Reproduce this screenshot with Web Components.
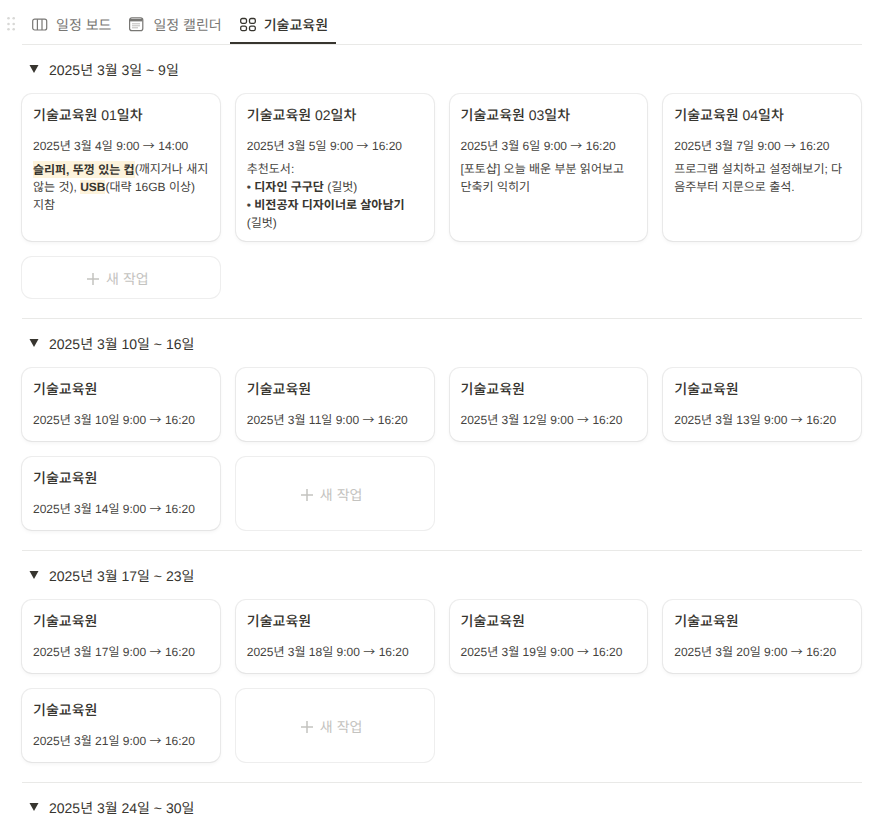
<!DOCTYPE html>
<html lang="ko">
<head>
<meta charset="utf-8">
<title>일정</title>
<style>
  html, body { margin: 0; background: #fff; height: 828px; overflow: hidden; }
  body { font-family: "Liberation Sans", "Noto Sans CJK KR", sans-serif; color: #37352f; text-rendering: geometricPrecision; }
</style>
</head>
<body>
<schedule-page>
  <view-tabs></view-tabs>

  <week-section label="2025년 3월 3일 ~ 9일">
    <task-card heading="기술교육원 01일차" when="2025년 3월 4일 9:00 → 14:00">
      <b class="mark tall">슬리퍼, 뚜껑 있는 컵</b>(깨지거나 새지 않는 것), <b class="mark">USB</b>(대략 16GB 이상)<br>지참
    </task-card>
    <task-card heading="기술교육원 02일차" when="2025년 3월 5일 9:00 → 16:20">
      추천도서:<br>• <b>디자인 구구단</b> (길벗)<br>• <b>비전공자 디자이너로 살아남기</b><br>(길벗)
    </task-card>
    <task-card heading="기술교육원 03일차" when="2025년 3월 6일 9:00 → 16:20">
      [포토샵] 오늘 배운 부분 읽어보고 단축키 익히기
    </task-card>
    <task-card heading="기술교육원 04일차" when="2025년 3월 7일 9:00 → 16:20">
      프로그램 설치하고 설정해보기; 다음주부터 지문으로 출석.
    </task-card>
    <new-card></new-card>
  </week-section>

  <week-section label="2025년 3월 10일 ~ 16일">
    <task-card heading="기술교육원" when="2025년 3월 10일 9:00 → 16:20"></task-card>
    <task-card heading="기술교육원" when="2025년 3월 11일 9:00 → 16:20"></task-card>
    <task-card heading="기술교육원" when="2025년 3월 12일 9:00 → 16:20"></task-card>
    <task-card heading="기술교육원" when="2025년 3월 13일 9:00 → 16:20"></task-card>
    <task-card heading="기술교육원" when="2025년 3월 14일 9:00 → 16:20"></task-card>
    <new-card></new-card>
  </week-section>

  <week-section label="2025년 3월 17일 ~ 23일">
    <task-card heading="기술교육원" when="2025년 3월 17일 9:00 → 16:20"></task-card>
    <task-card heading="기술교육원" when="2025년 3월 18일 9:00 → 16:20"></task-card>
    <task-card heading="기술교육원" when="2025년 3월 19일 9:00 → 16:20"></task-card>
    <task-card heading="기술교육원" when="2025년 3월 20일 9:00 → 16:20"></task-card>
    <task-card heading="기술교육원" when="2025년 3월 21일 9:00 → 16:20"></task-card>
    <new-card></new-card>
  </week-section>

  <week-section label="2025년 3월 24일 ~ 30일"></week-section>
</schedule-page>

<script>
class SchedulePage extends HTMLElement {
  constructor() {
    super();
    this.attachShadow({ mode: 'open' }).innerHTML = `<style>
      :host { display: block; padding: 5px 18px 0 22px; position: relative; }
      .grip { position: absolute; left: 7px; top: 16px; width: 9px; height: 16px; }
    </style>
    <svg class="grip" viewBox="0 0 9 16" fill="#d8d8d6">
      <circle cx="1.5" cy="2.3" r="1.3"/><circle cx="6.7" cy="2.3" r="1.3"/>
      <circle cx="1.5" cy="8" r="1.3"/><circle cx="6.7" cy="8" r="1.3"/>
      <circle cx="1.5" cy="13.3" r="1.3"/><circle cx="6.7" cy="13.3" r="1.3"/>
    </svg>
    <slot></slot>`;
  }
}

class ViewTabs extends HTMLElement {
  constructor() {
    super();
    this.attachShadow({ mode: 'open' }).innerHTML = `<style>
      :host { display: flex; height: 39px; border-bottom: 1px solid #e9e9e7; font-size: 14px; color: #787774; }
      .tab { display: flex; align-items: center; gap: 8px; padding: 0 8px 0 10px; height: 39px; box-sizing: border-box; }
      .tab:first-child { margin-right: 2px; }
      .tab.on { color: #37352f; box-shadow: inset 0 -2px 0 #37352f; font-weight: 500; }
      svg { width: 16px; height: 16px; flex: none; }
    </style>
    <div class="tab">
      <svg viewBox="0 0 16 16" fill="none" stroke="currentColor" stroke-width="1.2"><rect x=".7" y="2.2" width="14" height="10.8" rx="2"/><path d="M5.4 2.2v10.8M10 2.2v10.8"/></svg>
      일정 보드
    </div>
    <div class="tab">
      <svg viewBox="0 0 16 16" fill="none" stroke="currentColor"><rect x=".6" y=".8" width="13.2" height="12.8" rx="2.2" stroke-width="1.2"/><path d="M1 3.2h12.4" stroke-width="2.4"/><path d="M3.5 6.8h7.5M3.5 8.8h7.5M3.5 10.8h5" stroke-width="1" stroke-dasharray="1 1"/></svg>
      일정 캘린더
    </div>
    <div class="tab on">
      <svg viewBox="0 0 16 16" fill="none" stroke="currentColor" stroke-width="1.3"><rect x=".7" y="1.5" width="5.8" height="4.8" rx="1.6"/><rect x="9.5" y="1.5" width="5.8" height="4.8" rx="1.6"/><rect x=".7" y="9.2" width="5.8" height="4.4" rx="1.6"/><rect x="9.5" y="9.2" width="5.8" height="4.4" rx="1.6"/></svg>
      기술교육원
    </div>`;
  }
}

class WeekSection extends HTMLElement {
  constructor() {
    super();
    this.attachShadow({ mode: 'open' }).innerHTML = `<style>
      :host { display: block; border-bottom: 1px solid #e9e9e7; padding: 0 0 20px; }
      :host(:last-child) { border-bottom: 0; }
      .head { display: flex; align-items: center; height: 49px; font-size: 14px; }
      .arrow { width: 10px; height: 8px; margin: 0 10px 1px 7px; }
      .grid { display: grid; grid-template-columns: repeat(4, 1fr); gap: 16px; margin-right: 1px; }
    </style>
    <div class="head">
      <svg class="arrow" viewBox="0 0 10 8"><path d="M0.5 0h9L5 8z" fill="#37352f"/></svg>
      <span class="label"></span>
    </div>
    <div class="grid"><slot></slot></div>`;
    this.shadowRoot.querySelector('.label').textContent = this.getAttribute('label');
  }
}

class TaskCard extends HTMLElement {
  constructor() {
    super();
    this.attachShadow({ mode: 'open' }).innerHTML = `<style>
      :host { display: block; box-sizing: border-box; padding: 10px 10px 10px 11px; border-radius: 10px; background: #fff;
        box-shadow: 0 0 0 1px rgba(15,15,15,.07), 0 2px 4px rgba(15,15,15,.05); font-size: 12px; line-height: 18px; color: #45433e; }
      .title { font-size: 14px; font-weight: 500; line-height: 22px; margin-bottom: 11px; color: #37352f; }
      .when { height: 20px; }
      .arw { font-family: "Noto Sans CJK KR", sans-serif; }
      .body { margin: 3px 0 -1px; }
      ::slotted(b) { font-weight: 700; color: #37352f; }
      ::slotted(b.mark) { background: #fdf3dc; }
      ::slotted(b.tall) { padding: 1.5px 0; }
    </style>
    <div class="title"></div>
    <div class="when"></div>
    <div class="body"><slot></slot></div>`;
    this.shadowRoot.querySelector('.title').textContent = this.getAttribute('heading');
    const [start, end] = this.getAttribute('when').split(' → ');
    const arw = document.createElement('span');
    arw.className = 'arw';
    arw.textContent = '→';
    this.shadowRoot.querySelector('.when').append(start + ' ', arw, ' ' + end);
    if (!this.textContent.trim()) this.shadowRoot.querySelector('.body').style.display = 'none';
  }
}

class NewCard extends HTMLElement {
  constructor() {
    super();
    this.attachShadow({ mode: 'open' }).innerHTML = `<style>
      :host { display: flex; align-items: center; justify-content: center; gap: 7px; box-sizing: border-box; min-height: 41px; padding: 2px 6px 0 0;
        border-radius: 10px; box-shadow: 0 0 0 1px rgba(15,15,15,.07); font-size: 14px; color: #c4c3c0; }
      svg { width: 12px; height: 12px; }
    </style>
    <svg viewBox="0 0 12 12"><path d="M6 0v12M0 6h12" stroke="#c4c3c0" stroke-width="1.5" fill="none"/></svg>
    <span>새 작업</span>`;
  }
}

customElements.define('schedule-page', SchedulePage);
customElements.define('view-tabs', ViewTabs);
customElements.define('week-section', WeekSection);
customElements.define('task-card', TaskCard);
customElements.define('new-card', NewCard);
</script>
</body>
</html>
